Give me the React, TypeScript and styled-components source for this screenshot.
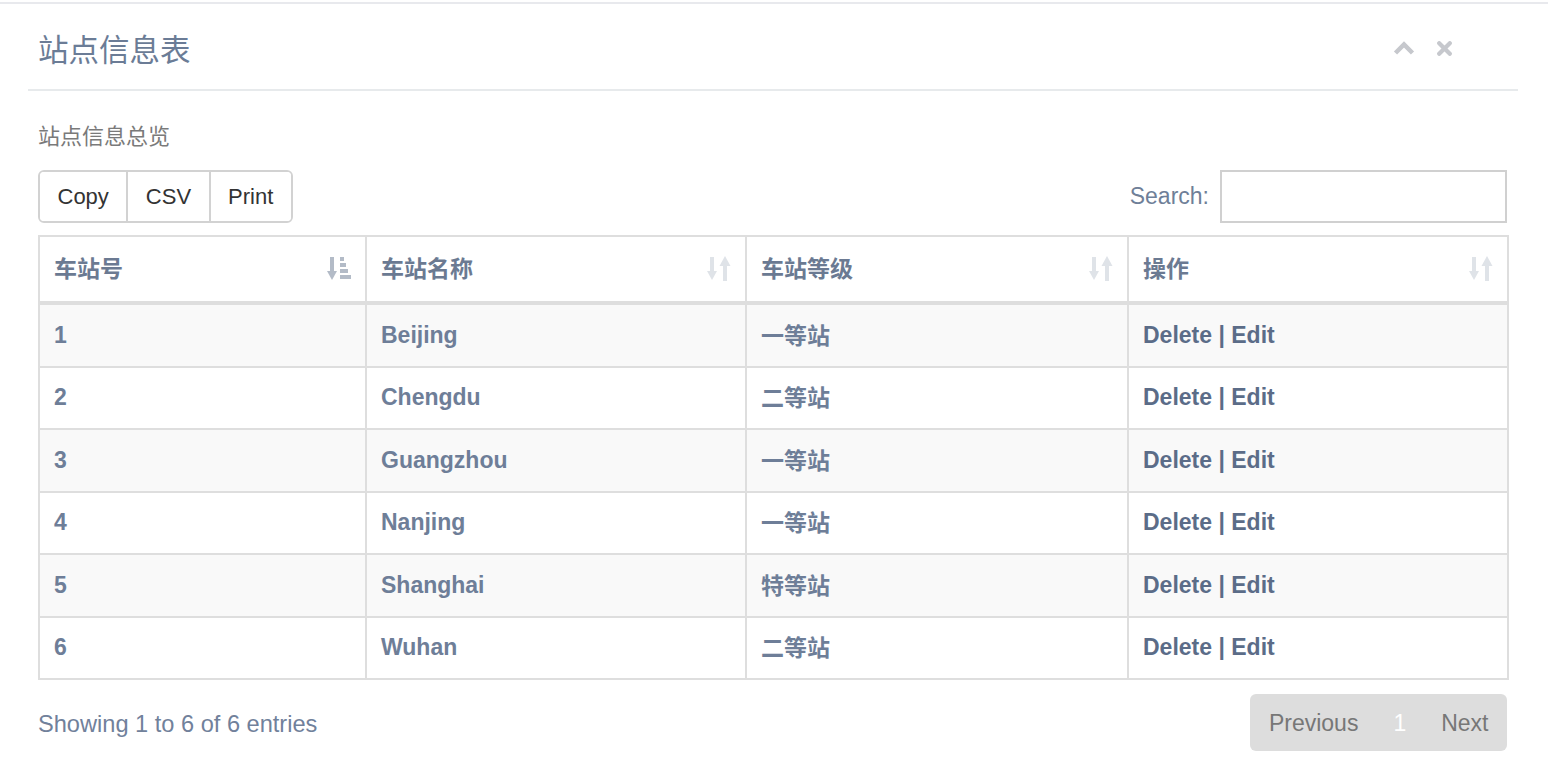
import React from "react";
import styled, { createGlobalStyle } from "styled-components";

const Global = createGlobalStyle`
  html, body { margin: 0; padding: 0; background: #fff; }
  body {
    font-family: "Liberation Sans", Arial, "Noto Sans CJK SC", sans-serif;
    -webkit-font-smoothing: antialiased;
  }
`;

const Page = styled.div`
  padding-top: 2px;
`;

const Panel = styled.section`
  border-top: 2px solid #e8e9ed;
  padding: 0 30px 0 28px;
`;

const TitleBar = styled.header`
  height: 87px;
  padding: 3px 66px 0 10px;
  box-sizing: border-box;
  border-bottom: 2px solid #e7eaec;
  display: flex;
  align-items: center;
  justify-content: space-between;
`;

const Title = styled.h2`
  margin: 0;
  font-size: 30.5px;
  font-weight: normal;
  color: #6b7c96;
  font-family: "Noto Sans CJK SC", sans-serif;
`;

const Tools = styled.div`
  display: flex;
  align-items: center;
  gap: 22px;
`;

const Content = styled.div`
  padding: 28px 11px 0 10px;
`;

const Subtitle = styled.h5`
  margin: 0 0 21px;
  font-size: 22px;
  line-height: 30px;
  font-weight: normal;
  color: #7a7a7a;
  font-family: "Noto Sans CJK SC", sans-serif;
`;

const ToolbarRow = styled.div`
  display: flex;
  justify-content: space-between;
  align-items: center;
  height: 53px;
  margin-bottom: 12px;
`;

const ButtonGroup = styled.div`
  display: inline-flex;
  height: 53px;
  box-sizing: border-box;
  border: 2px solid #d2d2d2;
  border-radius: 6px;
  overflow: hidden;
`;

const ToolButton = styled.button`
  font-family: inherit;
  font-size: 22px;
  color: #333;
  background: #fff;
  border: none;
  padding: 0 17.5px;
  & + & {
    border-left: 2px solid #d2d2d2;
  }
`;

const SearchLabel = styled.label`
  display: flex;
  align-items: center;
  gap: 11px;
  font-size: 23px;
  color: #6f7f98;
`;

const SearchInput = styled.input`
  width: 287px;
  height: 53px;
  box-sizing: border-box;
  border: 2px solid #d0d0d0;
  outline: none;
  font-size: 23px;
`;

const Table = styled.table`
  width: 100%;
  border-collapse: collapse;
  table-layout: fixed;
  border: 2px solid #dedede;
`;

const Col = styled.col<{ $w: number }>`
  width: ${(p) => p.$w}px;
`;

const Th = styled.th`
  height: 60px;
  padding: 0 14px 4px;
  border: 2px solid #dedede;
  border-bottom-width: 4px;
  text-align: left;
  font-size: 23px;
  font-weight: bold;
  color: #6b7a92;
  font-family: "Noto Sans CJK SC", sans-serif;
`;

const ThInner = styled.div`
  display: flex;
  align-items: center;
  justify-content: space-between;
`;

const SortSlot = styled.span`
  display: flex;
  margin-top: 2px;
`;

const Row = styled.tr<{ $odd: boolean }>`
  background: ${(p) => (p.$odd ? "#f9f9f9" : "#fff")};
`;

const Td = styled.td<{ $link?: boolean; $cjk?: boolean }>`
  height: ${(p) => (p.$cjk ? "57.5px" : "60.5px")};
  padding: 0 14px ${(p) => (p.$cjk ? "3px" : "0")};
  border: 2px solid #dedede;
  font-size: 23px;
  font-weight: bold;
  color: ${(p) => (p.$link ? "#5b6c88" : "#6e7e98")};
  font-family: ${(p) =>
    p.$cjk
      ? '"Noto Sans CJK SC", sans-serif'
      : '"Liberation Sans", Arial, "Noto Sans CJK SC", sans-serif'};
`;

const Footer = styled.div`
  margin-top: 14px;
  display: flex;
  justify-content: space-between;
  align-items: center;
`;

const Info = styled.div`
  font-size: 23.6px;
  color: #71819b;
  padding-top: 3px;
`;

const Pager = styled.div`
  display: flex;
  height: 57px;
  background: #dddddd;
  border-radius: 6px;
  padding: 0 1px;
`;

const PageItem = styled.span<{ $active?: boolean }>`
  padding: 0 17.5px;
  line-height: 59px;
  font-size: 23px;
  color: ${(p) => (p.$active ? "#ffffff" : "#777777")};
`;

const ChevronUp = () => (
  <svg width="22" height="16" viewBox="0 0 22 16">
    <polyline
      points="2.5,13 11,4.5 19.5,13"
      fill="none"
      stroke="#c6c8cd"
      strokeWidth="4.5"
      strokeLinejoin="miter"
    />
  </svg>
);

const CloseIcon = () => (
  <svg width="15" height="15" viewBox="0 0 15 15">
    <path d="M2.2 2.2 L12.8 12.8 M12.8 2.2 L2.2 12.8" stroke="#c6c8cd" strokeWidth="4.2" strokeLinecap="round" />
  </svg>
);

const SortBoth = () => (
  <svg width="24" height="26" viewBox="0 0 24 26">
    <g fill="#dfe3e8">
      <rect x="3" y="2" width="4" height="16" />
      <polygon points="0,16 10,16 5,25" />
      <rect x="16" y="9" width="4" height="17" />
      <polygon points="12.5,11 23.5,11 18,1" />
    </g>
  </svg>
);

const SortAsc = () => (
  <svg width="24" height="26" viewBox="0 0 24 26">
    <g fill="#b3bbc7">
      <rect x="3" y="2" width="4" height="16" />
      <polygon points="0,16 10,16 5,25" />
      <rect x="13" y="2" width="4" height="4" />
      <rect x="13" y="8" width="6" height="4" />
      <rect x="13" y="14" width="8" height="4" />
      <rect x="13" y="20" width="11" height="4" />
    </g>
  </svg>
);

const headers = ["车站号", "车站名称", "车站等级", "操作"];
const widths = [327, 380, 382, 380];

const rows = [
  ["1", "Beijing", "一等站"],
  ["2", "Chengdu", "二等站"],
  ["3", "Guangzhou", "一等站"],
  ["4", "Nanjing", "一等站"],
  ["5", "Shanghai", "特等站"],
  ["6", "Wuhan", "二等站"],
];

export default function App() {
  return (
    <Page>
      <Global />
      <Panel>
        <TitleBar>
          <Title>站点信息表</Title>
          <Tools>
            <ChevronUp />
            <CloseIcon />
          </Tools>
        </TitleBar>
        <Content>
          <Subtitle>站点信息总览</Subtitle>
          <ToolbarRow>
            <ButtonGroup>
              <ToolButton>Copy</ToolButton>
              <ToolButton>CSV</ToolButton>
              <ToolButton>Print</ToolButton>
            </ButtonGroup>
            <SearchLabel>
              Search:
              <SearchInput type="search" />
            </SearchLabel>
          </ToolbarRow>
          <Table>
            <colgroup>
              {widths.map((w, i) => (
                <Col key={i} $w={w} />
              ))}
            </colgroup>
            <thead>
              <tr>
                {headers.map((h, i) => (
                  <Th key={h}>
                    <ThInner>
                      <span>{h}</span>
                      <SortSlot>{i === 0 ? <SortAsc /> : <SortBoth />}</SortSlot>
                    </ThInner>
                  </Th>
                ))}
              </tr>
            </thead>
            <tbody>
              {rows.map((r, i) => (
                <Row key={r[0]} $odd={i % 2 === 0}>
                  <Td>{r[0]}</Td>
                  <Td>{r[1]}</Td>
                  <Td $cjk>{r[2]}</Td>
                  <Td $link>Delete | Edit</Td>
                </Row>
              ))}
            </tbody>
          </Table>
          <Footer>
            <Info>Showing 1 to 6 of 6 entries</Info>
            <Pager>
              <PageItem>Previous</PageItem>
              <PageItem $active>1</PageItem>
              <PageItem>Next</PageItem>
            </Pager>
          </Footer>
        </Content>
      </Panel>
    </Page>
  );
}
